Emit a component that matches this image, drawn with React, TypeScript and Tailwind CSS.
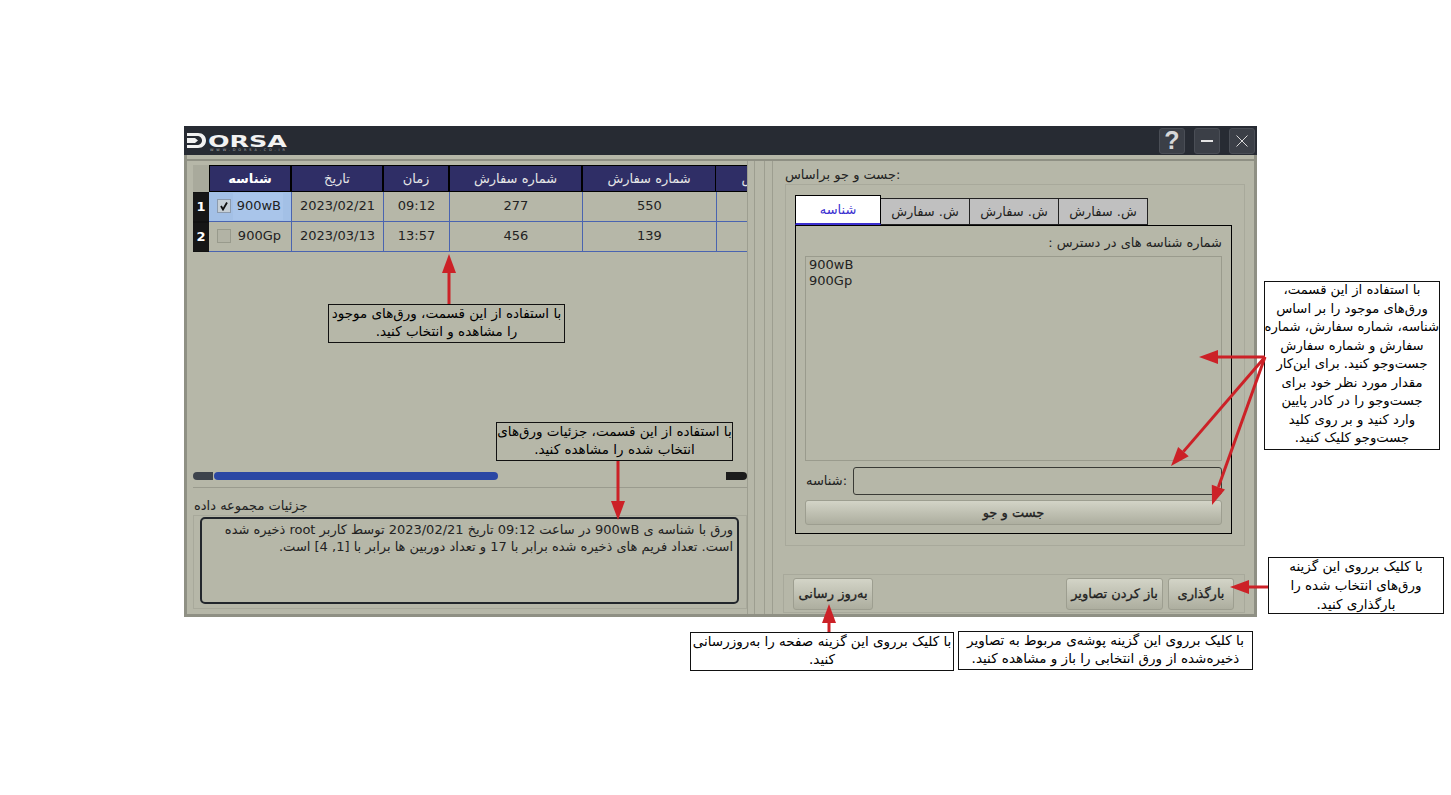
const APP = "font-['DejaVu_Sans',sans-serif]";

const ROWS = [
  { n: '1', id: '900wB', date: '2023/02/21', time: '09:12', a: '277', b: '550', on: true },
  { n: '2', id: '900Gp', date: '2023/03/13', time: '13:57', a: '456', b: '139', on: false },
];

const HEAD = [
  { label: 'شناسه', w: 'w-[82px]', bold: true },
  { label: 'تاریخ', w: 'w-[92px]' },
  { label: 'زمان', w: 'w-[66px]' },
  { label: 'شماره سفارش', w: 'w-[133px]' },
  { label: 'شماره سفارش', w: 'w-[134px]' },
];

const NOTES = [
  { box: 'left-[328px] top-[304px] w-[237px] h-[39px] leading-[18px] text-[13.5px]', lines: ['با استفاده از این قسمت، ورق‌های موجود', 'را مشاهده و انتخاب کنید.'] },
  { box: 'left-[496px] top-[422px] w-[237px] h-[39px] leading-[18px] text-[13.5px]', lines: ['با استفاده از این قسمت، جزئیات ورق‌های', 'انتخاب شده را مشاهده کنید.'] },
  {
    box: 'left-[1264px] top-[281px] w-[176px] h-[169px] bg-white leading-[18.5px] text-[13.2px]',
    lines: ['با استفاده از این قسمت،', 'ورق‌های موجود را بر اساس', 'شناسه، شماره سفارش، شماره', 'سفارش و شماره سفارش', 'جست‌وجو کنید. برای این‌کار', 'مقدار مورد نظر خود برای', 'جست‌وجو را در کادر پایین', 'وارد کنید و بر روی کلید', 'جست‌وجو کلیک کنید.'],
  },
  { box: 'left-[1268px] top-[557px] w-[176px] h-[57px] bg-white leading-[19px] text-[13.5px]', lines: ['با کلیک برروی این گزینه', 'ورق‌های انتخاب شده را', 'بارگذاری کنید.'] },
  { box: 'left-[958px] top-[631px] w-[295px] h-[39px] bg-white leading-[18px] text-[13.5px]', lines: ['با کلیک برروی این گزینه پوشه‌ی مربوط به تصاویر', 'ذخیره‌شده از ورق انتخابی را باز و مشاهده کنید.'] },
  { box: 'left-[690px] top-[632px] w-[264px] h-[39px] bg-white leading-[18px] text-[13.5px]', lines: ['با کلیک برروی این گزینه صفحه را به‌روزرسانی', 'کنید.'] },
];

const ARROWS = [
  [449, 304, 449, 254],
  [618, 461, 618, 520],
  [1265, 357, 1199, 357],
  [1265, 357, 1171, 466],
  [1265, 357, 1212, 505],
  [1268, 587, 1230, 587],
  [829, 632, 829, 604],
];

function Arrow({ x1, y1, x2, y2 }: { x1: number; y1: number; x2: number; y2: number }) {
  const len = Math.hypot(x2 - x1, y2 - y1);
  const ux = (x2 - x1) / len;
  const uy = (y2 - y1) / len;
  const bx = x2 - ux * 19;
  const by = y2 - uy * 19;
  const head = `${x2},${y2} ${bx - uy * 7},${by + ux * 7} ${bx + uy * 7},${by - ux * 7}`;
  return (
    <>
      <line x1={x1} y1={y1} x2={bx} y2={by} stroke="#cc2127" strokeWidth="3" />
      <polygon points={head} fill="#cc2127" />
    </>
  );
}

function Btn({ label, className }: { label: string; className: string }) {
  return (
    <div dir="rtl" className={`flex items-center justify-center whitespace-nowrap rounded-[3px] border border-[#9d9e90] bg-gradient-to-b from-[#d3d4c7] to-[#adae9f] text-[13px] text-[#222] [-webkit-text-stroke:0.3px_#222] ${className}`}>
      {label}
    </div>
  );
}

function Logo() {
  return (
    <svg width="104" height="22" viewBox="0 0 104 22" className="ml-[3px] mt-[1px]">
      <path d="M0 3h11c5 0 8 3.300 8 7.500S16 18 11 18H0v-3h10c3 0 5-2 5-4.500S13 6 10 6H0z" fill="#f2f2f2" />
      <path d="M0 8h8l3 2.500L8 13H0z" fill="#f2f2f2" />
      <text x="21" y="16.500" fontFamily="'DejaVu Sans', sans-serif" fontWeight="bold" fontSize="16" fill="#f2f2f2" textLength="79" lengthAdjust="spacingAndGlyphs">ORSA</text>
      <text x="23" y="21" fontFamily="'DejaVu Sans', sans-serif" fontSize="3.500" fill="#b5b5b5" textLength="75">WWW.DORSA.CO.IR</text>
    </svg>
  );
}

function TitleButton({ children }: { children: React.ReactNode }) {
  return (
    <div className="flex h-[26px] w-[26px] items-center justify-center rounded-[3px] border border-[#4a4e56] bg-[#3b3f47]">
      {children}
    </div>
  );
}

function Table() {
  const cell = 'flex items-center justify-center border-l border-b border-[#4a64b0] pb-[1px]';
  return (
    <div className="h-[88px] w-[554px] overflow-hidden text-[13px] text-[#222]">
      <div className="flex h-[28px] pt-[1px] text-[#e6e6e6]">
        <div className="w-[16px] bg-[#a9aa9c]" />
        {HEAD.map((h, i) => (
          <div key={i} dir="rtl" className={`flex items-center justify-center border-x border-y border-black bg-[#2f2e66] text-[13px] ${h.w} ${h.bold ? 'font-bold text-white' : ''}`}>
            {h.label}
          </div>
        ))}
        <div className="w-[31px] overflow-hidden border-y border-black bg-[#2f2e66] text-[13px]">
          <div dir="rtl" className="flex h-full w-[134px] items-center justify-center whitespace-nowrap">شماره سفارش</div>
        </div>
      </div>
      {ROWS.map((r) => (
        <div key={r.n} className="flex h-[30px]">
          <div className="flex w-[16px] items-center justify-center border-y border-[#111] bg-[#161616] text-[13px] font-bold text-white">{r.n}</div>
          <div className={`flex w-[82px] items-center border-b border-[#4a64b0] pb-[1px] pl-[8px] ${r.on ? 'bg-[#a3c0e6]' : ''}`}>
            <div className={`flex h-[14px] w-[14px] items-center justify-center border ${r.on ? 'border-[#8c9bae] bg-[#c6cfd6]' : 'border-[#989a8c] bg-[#b2b3a5]'}`}>
              {r.on && (
                <svg width="10" height="10" viewBox="0 0 10 10">
                  <path d="M2 5l2 3.500L8 1.500" fill="none" stroke="#111" strokeWidth="1.800" />
                </svg>
              )}
            </div>
            <span className={`ml-[2px] flex h-[27px] w-[50px] items-center justify-end pr-[2px] ${r.on ? 'bg-[#a9c5ea]' : ''}`}>{r.id}</span>
          </div>
          <div className={`w-[92px] ${cell}`}>{r.date}</div>
          <div className={`w-[66px] ${cell}`}>{r.time}</div>
          <div className={`w-[133px] ${cell}`}>{r.a}</div>
          <div className={`w-[134px] ${cell}`}>{r.b}</div>
          <div className="w-[31px] border-l border-b border-[#4a64b0]" />
        </div>
      ))}
    </div>
  );
}

function LeftPanel() {
  return (
    <div className="flex w-[560px] shrink-0 flex-col pl-[6px] pt-[3px]">
      <Table />
      <div className="mt-[219px] flex h-[9px] w-[554px] items-center">
        <div className="h-[8px] w-[20px] rounded-l-full bg-[#3d434c]" />
        <div className="ml-[1px] h-[8px] w-[284px] rounded-full bg-[#2b47a4]" />
        <div className="ml-auto h-[8px] w-[21px] rounded-r-full bg-[#1c1c1c]" />
      </div>
      <div className="mt-[7px] h-[1px] w-[554px] bg-[#9a9b8e]" />
      <div dir="rtl" className="mt-[10px] w-fit pl-[1px] text-[13px] leading-[16px] text-[#222]">جزئیات مجموعه داده</div>
      <div className="mt-[1px] h-[94px] w-[554px] border border-[#a8a99b] px-[6px] pt-[1px]">
        <div dir="rtl" className="h-[87px] w-[539px] rounded-[5px] border-2 border-[#22262c] pl-[3px] pr-[4px] pt-[2px] text-[13px] leading-[17px] text-[#222]">
          ورق با شناسه ی 900wB در ساعت 09:12 تاریخ 2023/02/21 توسط کاربر root ذخیره شده است. تعداد فریم های ذخیره شده برابر با 17 و تعداد دوربین ها برابر با [1, 4] است.
        </div>
      </div>
    </div>
  );
}

function RightPanel() {
  return (
    <div className="flex flex-1 flex-col pl-[12px] pt-[6px]">
      <div className="w-fit text-[13px] leading-[16px] text-[#222]">جست و جو براساس:</div>
      <div className="mt-[1px] h-[362px] w-[460px] border border-[#a8a99b] px-[9px] pt-[10px]">
        <div className="flex h-[30px] items-end">
          <div dir="rtl" className="flex h-[30px] w-[86px] items-center justify-center border border-b-2 border-black border-b-[#3b2fd0] bg-white text-[13px] text-[#3b2fd0]">شناسه</div>
          {[0, 1, 2].map((i) => (
            <div key={i} dir="rtl" className="flex h-[27px] w-[89px] items-center justify-center border border-l-0 border-[#222] bg-[#c0c0c0] text-[13px] text-[#222]">ش. سفارش</div>
          ))}
        </div>
        <div className="flex h-[309px] w-[437px] flex-col border border-black px-[9px] pt-[9px]">
          <div dir="rtl" className="text-[13px] leading-[16px] text-[#222]">شماره شناسه های در دسترس :</div>
          <div className="mt-[5px] h-[205px] w-[417px] border border-[#9a9b8d] px-[3px] text-[13px] leading-[16px] text-[#222]">
            <div>900wB</div>
            <div>900Gp</div>
          </div>
          <div className="mt-[6px] flex h-[28px] items-center">
            <div className="w-[48px] whitespace-nowrap pl-[1px] text-[13px] text-[#222]">شناسه:</div>
            <div className="h-[28px] w-[369px] rounded-[3px] border border-[#3a3b36]" />
          </div>
          <Btn label="جست و جو" className="mt-[5px] h-[25px] w-[417px]" />
        </div>
      </div>
      <div className="ml-[-2px] mt-[28px] flex h-[39px] w-[462px] items-center border border-[#a8a99b] pl-[9px] pr-[10px]">
        <Btn label="به‌روز رسانی" className="h-[32px] w-[80px]" />
        <Btn label="باز کردن تصاویر" className="ml-auto h-[32px] w-[97px]" />
        <Btn label="بارگذاری" className="ml-[5px] h-[32px] w-[66px]" />
      </div>
    </div>
  );
}

export default function App() {
  return (
    <div className={`relative h-[795px] w-[1451px] overflow-hidden bg-white pl-[184px] pt-[126px] ${APP}`}>
      <div className="flex h-[491px] w-[1073px] flex-col">
        <div className="flex h-[29px] items-center bg-[#272b33]">
          <Logo />
          <div className="ml-auto flex items-center gap-[9px] pr-[2px]">
            <TitleButton>
              <span className="font-['Liberation_Sans',sans-serif] text-[25px] leading-none font-bold text-[#d8d8d8]">?</span>
            </TitleButton>
            <TitleButton>
              <div className="h-[2px] w-[12px] bg-[#e4e4e4]" />
            </TitleButton>
            <TitleButton>
              <svg width="14" height="14" viewBox="0 0 14 14">
                <path d="M1.500 1.500l11 11M12.500 1.500l-11 11" stroke="#d8d8d8" strokeWidth="1" />
              </svg>
            </TitleButton>
          </div>
        </div>
        <div className="flex flex-1 flex-col border-x-[3px] border-b-[3px] border-[#8f9084] bg-[#b6b7a8]">
          <div className="h-[4px] shrink-0" />
          <div className="h-[2px] shrink-0 bg-[#8f9084]" />
          <div className="flex flex-1">
            <LeftPanel />
            <div className="flex w-[26px] shrink-0">
              <div className="h-full w-[8px] border-x border-[#9d9e90]" />
              <div className="ml-[9px] h-full w-[10px] border-x border-[#9d9e90]" />
            </div>
            <RightPanel />
          </div>
        </div>
      </div>

      {NOTES.map((n, i) => (
        <div key={i} dir="rtl" className={`absolute overflow-hidden border border-[#111] text-center text-black ${n.box}`}>
          <div className="mt-[-1px]">
            {n.lines.map((l, j) => (
              <div key={j} className="whitespace-nowrap">{l}</div>
            ))}
          </div>
        </div>
      ))}

      <svg className="pointer-events-none absolute left-0 top-0" width="1451" height="795">
        {ARROWS.map(([x1, y1, x2, y2], i) => (
          <Arrow key={i} x1={x1} y1={y1} x2={x2} y2={y2} />
        ))}
      </svg>
    </div>
  );
}
